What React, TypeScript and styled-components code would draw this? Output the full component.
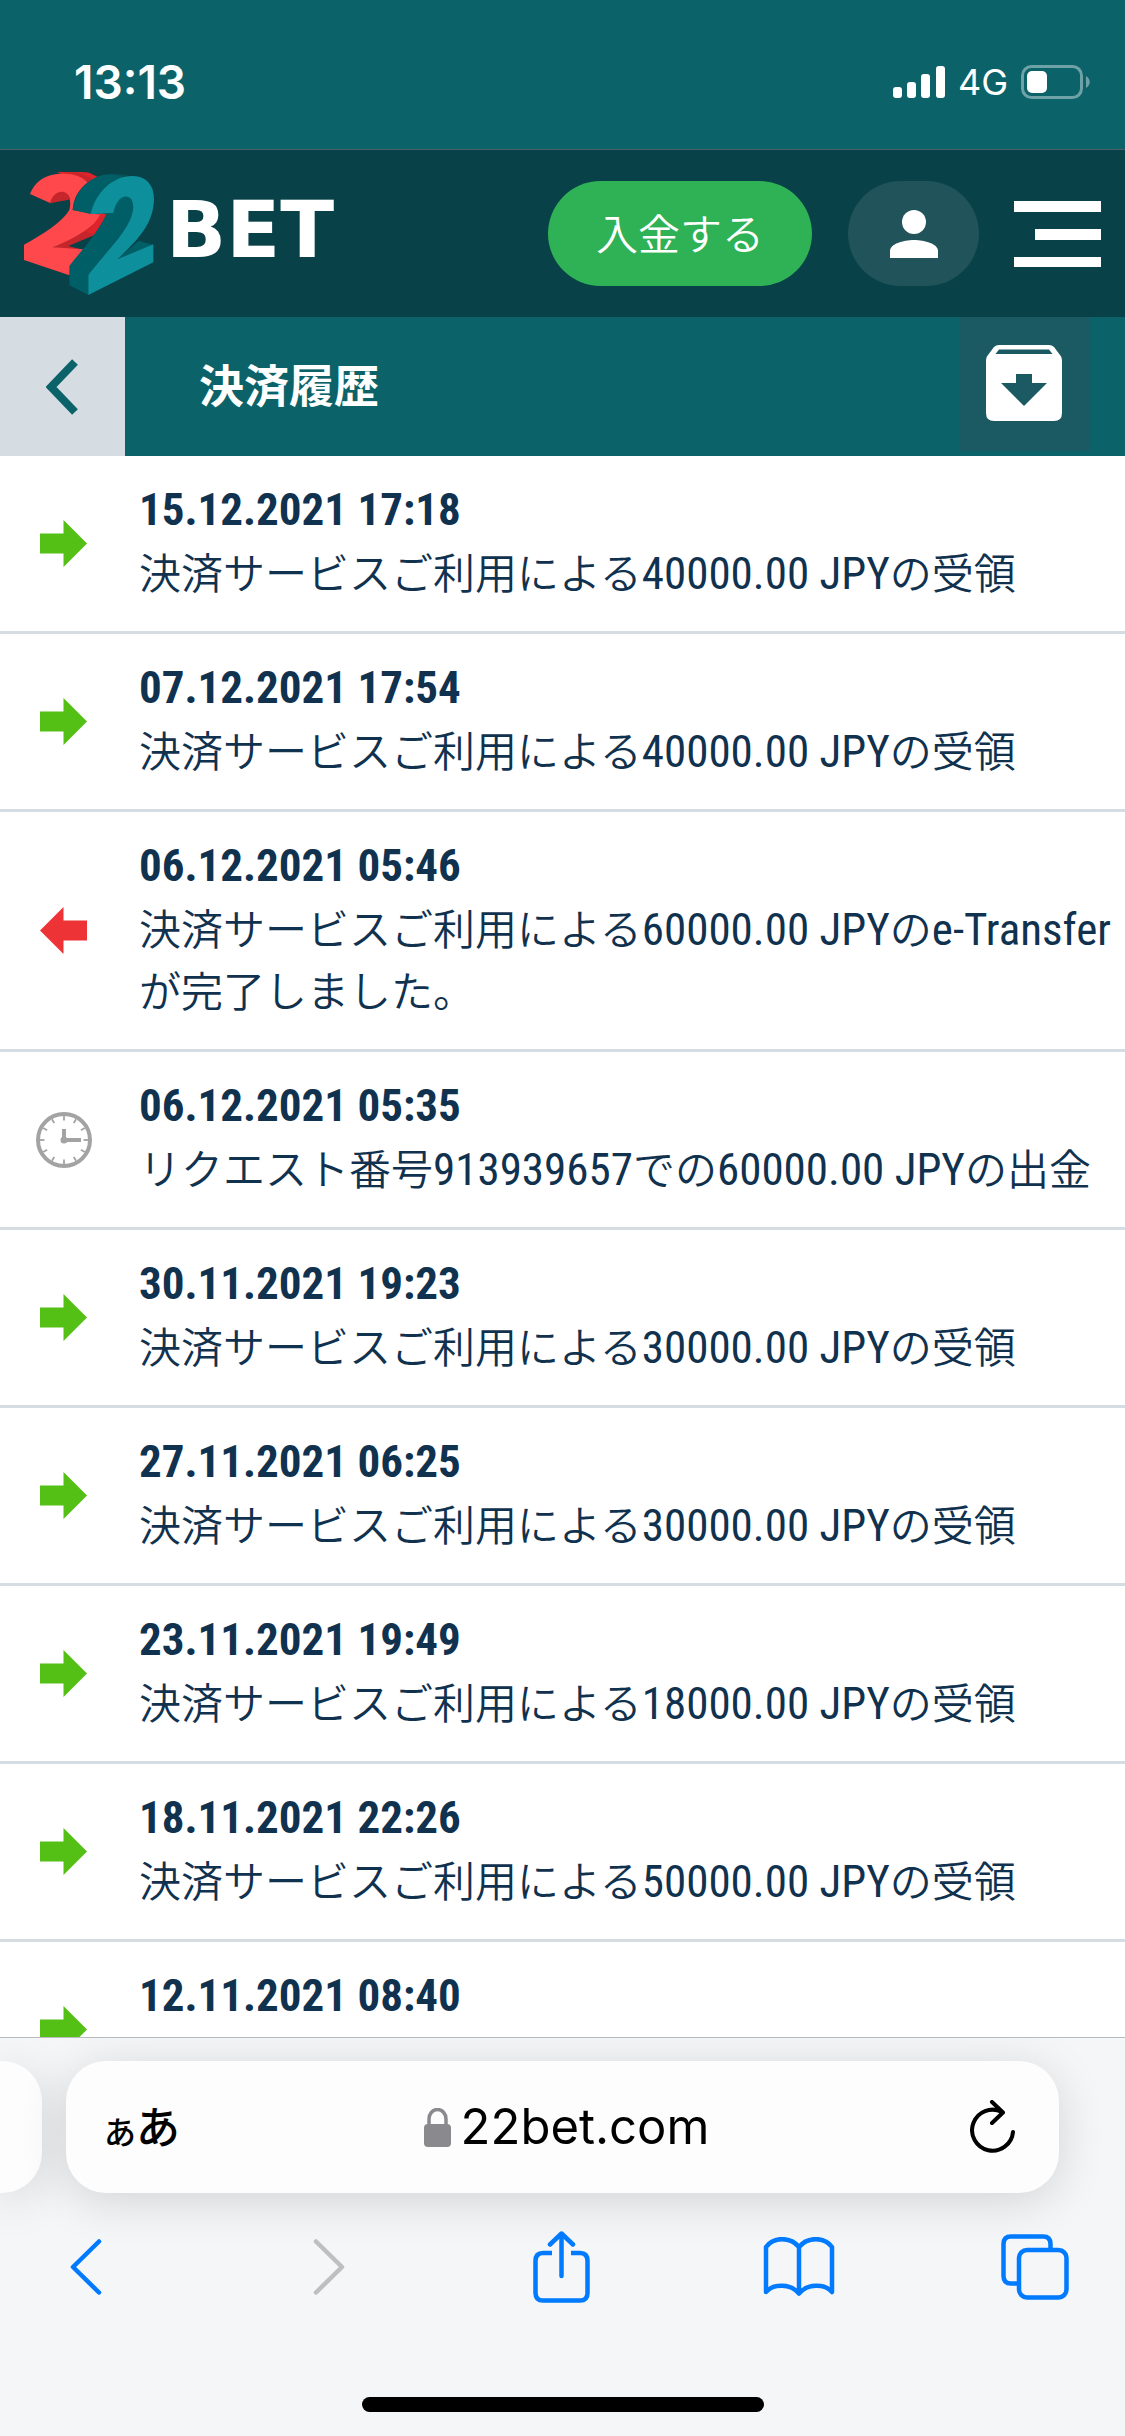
import React from "react";
import styled, { createGlobalStyle } from "styled-components";

const jp = `"Noto Sans CJK JP", sans-serif`;
const condensed = `"Roboto Condensed", Roboto, "Noto Sans CJK JP", sans-serif`;
const system = `Inter, "Noto Sans CJK JP", sans-serif`;

const teal = "#0b6369";
const navy = "#11324f";
const blue = "#007aff";

const GlobalStyle = createGlobalStyle`
  *, *::before, *::after { box-sizing: border-box; }
  body { margin: 0; background: #fff; }
  ul { list-style: none; margin: 0; padding: 0; }
  button { border: 0; padding: 0; margin: 0; background: none; color: inherit; font: inherit; cursor: pointer; }
  svg { display: block; flex: none; }
`;

const Screen = styled.div`
  display: flex;
  flex-direction: column;
  height: 100vh;
  overflow: hidden;
  font-family: ${jp};
`;

const StatusBar = styled.div`
  display: flex;
  align-items: center;
  justify-content: space-between;
  height: 150px;
  flex: none;
  padding: 14px 34px 0 74px;
  background: ${teal};
  border-bottom: 1px solid #4d5f68;
  color: #fff;
  font-family: ${system};
`;

const Clock = styled.time`
  font-size: 46px;
  font-weight: 600;
`;

const StatusIcons = styled.div`
  display: flex;
  align-items: center;
  gap: 13px;
  font-size: 36px;
  font-weight: 400;
`;

const SiteHeader = styled.header`
  display: flex;
  align-items: center;
  height: 167px;
  flex: none;
  padding: 0 24px;
  background: #084147;
`;

const LogoLink = styled.a`
  display: flex;
  align-items: center;
  gap: 12px;
  margin-right: auto;
  color: #fff;
  text-decoration: none;
`;

const Wordmark = styled.span`
  padding-bottom: 8px;
  font: bold 79px/100px "DejaVu Sans", sans-serif;
`;

const DepositButton = styled.button`
  height: 105px;
  padding: 0 48px 4px;
  border-radius: 53px;
  background: #2fb256;
  color: #fff;
  font: 350 42px ${jp};
`;

const AccountButton = styled.button`
  display: grid;
  place-items: center;
  width: 131px;
  height: 105px;
  margin: 0 35px 0 36px;
  border-radius: 53px;
  background: #20535a;
`;

const PageHeader = styled.div`
  display: flex;
  height: 139px;
  flex: none;
  padding-right: 35px;
  background: ${teal};
`;

const BackButton = styled.button`
  display: grid;
  place-items: center;
  width: 125px;
  padding-right: 2px;
  background: #d5dde2;
`;

const Title = styled.h1`
  flex: 1;
  margin: 0;
  padding-left: 74px;
  color: #fff;
  font: bold 45px/134px ${jp};
`;

const ArchiveButton = styled.button`
  display: grid;
  place-items: center;
  width: 130px;
  height: 134px;
  padding: 0 2px 2px 0;
  background: #1b5a62;
`;

const History = styled.main`
  flex: 1;
  min-height: 0;
  overflow: hidden;
  background: #fff;
`;

const Row = styled.li`
  display: grid;
  grid-template-columns: 127px 1fr;
  align-items: center;
  border-bottom: 3px solid #d5dde2;
  color: ${navy};
`;

const RowIcon = styled.div`
  display: grid;
  place-items: center;
`;

const RowBody = styled.div`
  min-height: 175px;
  padding: 24px 0 29px 12px;
  font: 350 42px/62px ${jp};
`;

const DateLine = styled.time`
  display: block;
  font: bold 45px/60px ${condensed};
`;

const Latin = styled.span`
  font: 400 45px/1 ${condensed};
`;

const BrowserBar = styled.footer`
  flex: none;
  overflow: hidden;
  border-top: 1px solid #b9babd;
  background: #f5f6f7;
  font-family: ${system};
`;

const TabStrip = styled.div`
  display: flex;
  gap: 24px;
  padding: 23px 66px 0 0;
`;

const PreviousTab = styled.div`
  width: 42px;
  height: 132px;
  border-radius: 0 40px 40px 0;
  background: #fdfdfd;
  box-shadow: 0 8px 48px rgba(0, 0, 0, 0.14);
`;

const AddressBar = styled.div`
  display: grid;
  grid-template-columns: 1fr auto 1fr;
  align-items: center;
  flex: 1;
  height: 132px;
  padding: 0 44px 0 38px;
  border-radius: 40px;
  background: #fdfdfd;
  box-shadow: 0 8px 48px rgba(0, 0, 0, 0.14);
`;

const TextSizeButton = styled.button`
  justify-self: start;
  font: 500 44px/60px ${jp};
`;

const SmallKana = styled.span`
  font-size: 32px;
`;

const AddressButton = styled.button`
  display: flex;
  align-items: center;
  gap: 10px;
  padding-left: 14px;
  font: 400 49px/60px ${system};
`;

const ReloadButton = styled.button`
  justify-self: end;
`;

const Toolbar = styled.nav`
  display: flex;
  align-items: center;
  justify-content: space-between;
  height: 148px;
  padding: 0 55px 0 52px;
`;

const ToolButton = styled.button`
  display: grid;
  place-items: center;
  width: 70px;
  height: 90px;
`;

const HomeIndicator = styled.div`
  width: 402px;
  height: 15px;
  margin: 56px auto 24px;
  border-radius: 8px;
  background: #000;
`;

type Kind = "in" | "out" | "pending";

const entries: { date: string; kind: Kind; text?: string }[] = [
  { date: "15.12.2021 17:18", kind: "in", text: "決済サービスご利用による40000.00 JPYの受領" },
  { date: "07.12.2021 17:54", kind: "in", text: "決済サービスご利用による40000.00 JPYの受領" },
  { date: "06.12.2021 05:46", kind: "out", text: "決済サービスご利用による60000.00 JPYのe-Transferが完了しました。" },
  { date: "06.12.2021 05:35", kind: "pending", text: "リクエスト番号913939657での60000.00 JPYの出金" },
  { date: "30.11.2021 19:23", kind: "in", text: "決済サービスご利用による30000.00 JPYの受領" },
  { date: "27.11.2021 06:25", kind: "in", text: "決済サービスご利用による30000.00 JPYの受領" },
  { date: "23.11.2021 19:49", kind: "in", text: "決済サービスご利用による18000.00 JPYの受領" },
  { date: "18.11.2021 22:26", kind: "in", text: "決済サービスご利用による50000.00 JPYの受領" },
  { date: "12.11.2021 08:40", kind: "in" },
];

// Numbers and Latin words are set in the condensed face, kana and kanji in the Japanese one.
function MixedText({ text }: { text: string }) {
  return (
    <>
      {text.split(/([ -~]+)/).map((part, i) => (i % 2 ? <Latin key={i}>{part}</Latin> : part))}
    </>
  );
}

function EntryIcon({ kind }: { kind: Kind }) {
  if (kind === "in") {
    return (
      <svg width="47" height="47" viewBox="0 0 47 47" fill="#54c016" role="img" aria-label="入金">
        <path d="M0 13.5h23.5V0L47 23.5 23.5 47V33.500H0z" />
      </svg>
    );
  }
  if (kind === "out") {
    return (
      <svg width="47" height="47" viewBox="0 0 47 47" fill="#ee3337" role="img" aria-label="出金">
        <path d="M47 13.500H23.500V0L0 23.500 23.500 47V33.500H47z" />
      </svg>
    );
  }
  return (
    <svg width="56" height="56" viewBox="0 0 56 56" fill="none" stroke="#a3a3a3" role="img" aria-label="処理中">
      <circle cx="28" cy="28" r="26" strokeWidth="4" />
      {Array.from({ length: 12 }, (_, i) => (
        <path key={i} d="M28 4v4.500" strokeWidth="1.800" transform={`rotate(${i * 30} 28 28)`} />
      ))}
      <path d="M28 17v11h17" strokeWidth="4" />
      <circle cx="28" cy="28" r="3.500" fill="#a3a3a3" stroke="none" />
    </svg>
  );
}

function LogoMark() {
  return (
    <svg width="130" height="123" viewBox="72 66 390 369" aria-hidden="true">
      <path fill="#e0232a" d="M170 67C200 64 245 65 268 68L292 80 262 104z" />
      <path fill="#c4262b" d="M195 67C230 66 250 70 276 88L262 98C250 80 225 72 195 67z" />
      <path fill="#c4262b" d="M158 292C215 262 262 238 300 188L322 194 282 256 205 288 252 300 242 312z" />
      <path
        fill="#ff484b"
        d="M90 132C104 96 132 76 172 72C212 68 245 76 262 98C236 118 220 145 218 180L304 194C276 238 215 268 158 292L248 298L208 376L72 330V284C138 248 186 216 208 180C216 150 206 126 184 128C168 130 158 144 152 160z"
      />
      <path fill="#c4262b" d="M150 160C158 120 202 112 211 148C190 154 172 155 150 160z" />
      <path fill="#e0232a" d="M302 192L322 194 284 252 258 246C278 230 290 212 302 192z" />
      <path fill="#005f66" d="M218 180C228 118 270 76 330 72L398 80C330 90 292 130 272 192z" />
      <path fill="#0a5157" d="M330 72C352 70 374 74 396 80L372 84C356 76 344 74 330 72z" />
      <path
        fill="#005f66"
        d="M318 194L340 190C346 160 358 142 378 136C402 138 406 164 396 194C376 250 314 308 265 375V435L208 406V348C236 310 288 258 318 194z"
      />
      <path fill="#005f66" d="M350 330L416 272 458 284z" />
      <path
        fill="#0e909c"
        d="M272 192C288 126 338 78 398 78C440 80 462 104 462 148C460 220 418 266 352 328L460 283V337L265 435V375C316 306 390 240 399 180C404 146 384 132 364 144C350 154 344 172 340 190z"
      />
    </svg>
  );
}

const stroke = { fill: "none", stroke: blue, strokeWidth: 4.5, strokeLinecap: "round", strokeLinejoin: "round" } as const;

export default function App() {
  return (
    <Screen lang="ja">
      <GlobalStyle />
      <StatusBar>
        <Clock>13:13</Clock>
        <StatusIcons>
          <svg width="52" height="32" viewBox="0 0 52 32" fill="#fff" aria-hidden="true">
            <rect x="0" y="21" width="9" height="11" rx="3" />
            <rect x="14" y="16" width="9" height="16" rx="3" />
            <rect x="28" y="8" width="9" height="24" rx="3" />
            <rect x="43" y="0" width="9" height="32" rx="3" />
          </svg>
          4G
          <svg width="70" height="34" viewBox="0 0 70 34" aria-hidden="true">
            <rect x="1.500" y="1.500" width="59" height="31" rx="9" fill="none" stroke="#6ea2a6" strokeWidth="3" />
            <rect x="6" y="6" width="20" height="22" rx="5" fill="#fff" />
            <path d="M65 11c5 3 5 9 0 12z" fill="#6ea2a6" />
          </svg>
        </StatusIcons>
      </StatusBar>

      <SiteHeader>
        <LogoLink href="#" aria-label="22BET">
          <LogoMark />
          <Wordmark>BET</Wordmark>
        </LogoLink>
        <DepositButton>入金する</DepositButton>
        <AccountButton aria-label="アカウント">
          <svg width="48" height="48" viewBox="0 0 48 48" fill="#fff" aria-hidden="true">
            <circle cx="24" cy="12" r="12" />
            <path d="M0 48V41C0 34 13 30 24 30S48 34 48 41V48z" />
          </svg>
        </AccountButton>
        <button aria-label="メニュー">
          <svg width="87" height="66" viewBox="0 0 87 66" fill="#fff" aria-hidden="true">
            <path d="M0 0h87v11H0zM21 28h66v11H21zM0 56h87v10H0z" />
          </svg>
        </button>
      </SiteHeader>

      <PageHeader>
        <BackButton aria-label="戻る">
          <svg width="32" height="56" viewBox="0 0 32 56" fill="none" stroke={teal} strokeWidth="8" aria-hidden="true">
            <path d="M29 3L5 28l24 25" />
          </svg>
        </BackButton>
        <Title>決済履歴</Title>
        <ArchiveButton aria-label="アーカイブ">
          <svg width="76" height="76" viewBox="0 0 76 76" aria-hidden="true">
            <path
              fill="#fff"
              fillRule="evenodd"
              d="M13 0h50q3 0 5 2l6 8q2 2 2 5v53q0 8-8 8H8q-8 0-8-8V15q0-3 2-5l6-8q2-2 5-2zM13 4.500L9.500 9h57L63 4.500zM30 29v9H15l23 23 23-23H46v-9z"
            />
          </svg>
        </ArchiveButton>
      </PageHeader>

      <History>
        <ul>
          {entries.map((entry) => (
            <Row key={entry.date}>
              <RowIcon>
                <EntryIcon kind={entry.kind} />
              </RowIcon>
              <RowBody>
                <DateLine>{entry.date}</DateLine>
                {entry.text && <MixedText text={entry.text} />}
              </RowBody>
            </Row>
          ))}
        </ul>
      </History>

      <BrowserBar>
        <TabStrip>
          <PreviousTab />
          <AddressBar>
            <TextSizeButton>
              <SmallKana>あ</SmallKana>あ
            </TextSizeButton>
            <AddressButton>
              <svg width="27" height="39" viewBox="0 0 27 39" aria-hidden="true">
                <path d="M5 18V11a8.500 9.500 0 0 1 17 0v7" fill="none" stroke="#8a8a8e" strokeWidth="3.500" />
                <rect y="16" width="27" height="23" rx="4" fill="#8a8a8e" />
              </svg>
              22bet.com
            </AddressButton>
            <ReloadButton aria-label="再読み込み">
              <svg width="45" height="55" viewBox="0 0 45 55" fill="none" stroke="#000" strokeWidth="4" strokeLinecap="round" strokeLinejoin="round" aria-hidden="true">
                <path d="M32 12A20.500 20.500 0 1 0 43 32M22 2L33 12.500 22 23" />
              </svg>
            </ReloadButton>
          </AddressBar>
        </TabStrip>
        <Toolbar>
          <ToolButton aria-label="前のページ">
            <svg width="36" height="56" viewBox="2 0 36 56" {...stroke}>
              <path d="M32 2.500L6 28l26 25.500" />
            </svg>
          </ToolButton>
          <ToolButton aria-label="次のページ">
            <svg width="48" height="56" viewBox="-12 0 48 56" {...stroke} stroke="#bfbfbf">
              <path d="M4 2.500L30 28 4 53.500" />
            </svg>
          </ToolButton>
          <ToolButton aria-label="共有">
            <svg width="57" height="72" viewBox="0 0 57 72" {...stroke}>
              <path strokeLinecap="butt" d="M19 22H10q-7.500 0-7.500 8v32q0 7.500 7.500 7.500h37q7.500 0 7.500-7.500V30q0-8-7.500-8H38" />
              <path d="M28.500 45V2.500M17 13.500L28.500 2.500 40 13.500" />
            </svg>
          </ToolButton>
          <ToolButton aria-label="ブックマーク">
            <svg width="72" height="60" viewBox="0 0 71 60" {...stroke}>
              <path d="M35.500 10V56M35.500 10C27-.5 10-.5 2.500 10V55C10 46.500 27 46.500 35.500 56.500C44 46.500 61 46.500 68.500 55V10C61-.5 44-.5 35.500 10z" />
            </svg>
          </ToolButton>
          <ToolButton aria-label="タブ">
            <svg width="68" height="66" viewBox="0 0 68 66" {...stroke}>
              <path strokeLinecap="butt" d="M16 49.500H10q-7.500 0-7.500-7.500V10q0-7.500 7.500-7.500H42q7.500 0 7.500 7.500V15" />
              <rect x="18" y="16" width="47.500" height="47.500" rx="8" />
            </svg>
          </ToolButton>
        </Toolbar>
        <HomeIndicator />
      </BrowserBar>
    </Screen>
  );
}
